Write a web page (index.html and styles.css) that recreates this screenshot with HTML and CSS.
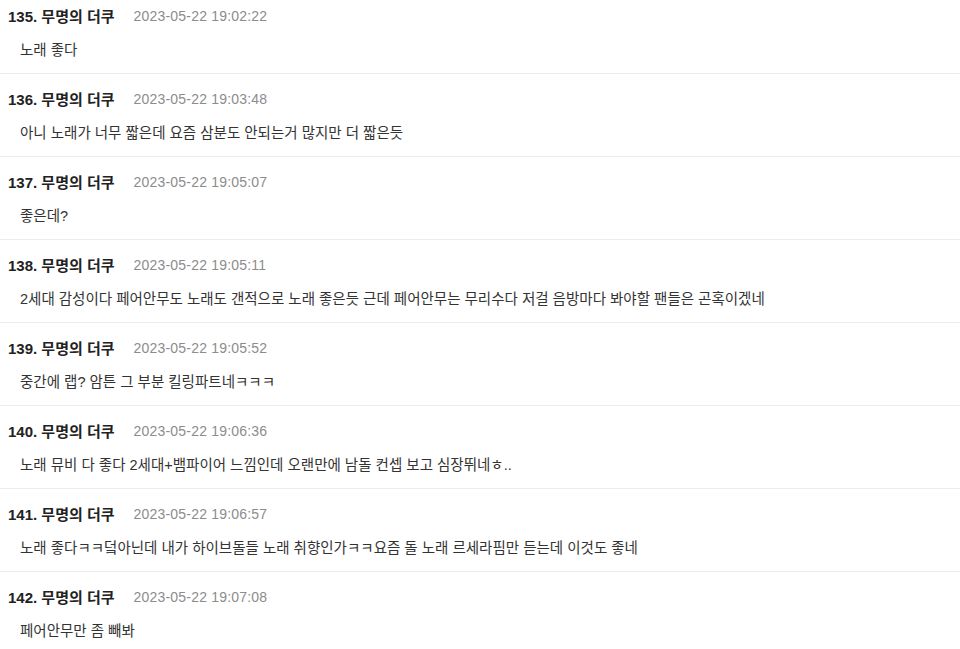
FILE: index.html
```html
<!DOCTYPE html>
<html lang="ko">
<head>
<meta charset="utf-8">
<link rel="stylesheet" href="styles.css">
</head>
<body>
<ul class="comments">
  <li class="comment">
    <div class="meta"><span class="name">135. 무명의 더쿠</span><span class="date">2023-05-22 19:02:22</span></div>
    <p class="text">노래 좋다</p>
  </li>
  <li class="comment">
    <div class="meta"><span class="name">136. 무명의 더쿠</span><span class="date">2023-05-22 19:03:48</span></div>
    <p class="text">아니 노래가 너무 짧은데 요즘 삼분도 안되는거 많지만 더 짧은듯</p>
  </li>
  <li class="comment">
    <div class="meta"><span class="name">137. 무명의 더쿠</span><span class="date">2023-05-22 19:05:07</span></div>
    <p class="text">좋은데?</p>
  </li>
  <li class="comment">
    <div class="meta"><span class="name">138. 무명의 더쿠</span><span class="date">2023-05-22 19:05:11</span></div>
    <p class="text">2세대 감성이다 페어안무도 노래도 갠적으로 노래 좋은듯 근데 페어안무는 무리수다 저걸 음방마다 봐야할 팬들은 곤혹이겠네</p>
  </li>
  <li class="comment">
    <div class="meta"><span class="name">139. 무명의 더쿠</span><span class="date">2023-05-22 19:05:52</span></div>
    <p class="text">중간에 랩? 암튼 그 부분 킬링파트네ㅋㅋㅋ</p>
  </li>
  <li class="comment">
    <div class="meta"><span class="name">140. 무명의 더쿠</span><span class="date">2023-05-22 19:06:36</span></div>
    <p class="text">노래 뮤비 다 좋다 2세대+뱀파이어 느낌인데 오랜만에 남돌 컨셉 보고 심장뛰네ㅎ..</p>
  </li>
  <li class="comment">
    <div class="meta"><span class="name">141. 무명의 더쿠</span><span class="date">2023-05-22 19:06:57</span></div>
    <p class="text">노래 좋다ㅋㅋ덬아닌데 내가 하이브돌들 노래 취향인가ㅋㅋ요즘 돌 노래 르세라핌만 듣는데 이것도 좋네</p>
  </li>
  <li class="comment">
    <div class="meta"><span class="name">142. 무명의 더쿠</span><span class="date">2023-05-22 19:07:08</span></div>
    <p class="text">페어안무만 좀 빼봐</p>
  </li>
</ul>
</body>
</html>
```

FILE: styles.css
```css
html, body {
  margin: 0;
  padding: 0;
  background: #ffffff;
}

body {
  font-family: "Liberation Sans", "Noto Sans CJK KR", sans-serif;
  color: #222222;
  overflow: hidden;
}

.comments {
  list-style: none;
  margin: -9px 0 0 0;
  padding: 0;
}

.comment {
  padding: 15px 8px 13px 8px;
  border-bottom: 1px solid #ececec;
}

.meta {
  display: flex;
  align-items: center;
  gap: 19px;
  height: 20px;
}

.name {
  font-size: 15px;
  font-weight: bold;
  color: #222222;
  position: relative;
  top: -1px;
}

.date {
  font-size: 14px;
  color: #8c8c8c;
  letter-spacing: 0.2px;
}

.text {
  margin: 14px 0 0 12px;
  font-size: 14.5px;
  line-height: 20px;
  color: #333333;
}
```
